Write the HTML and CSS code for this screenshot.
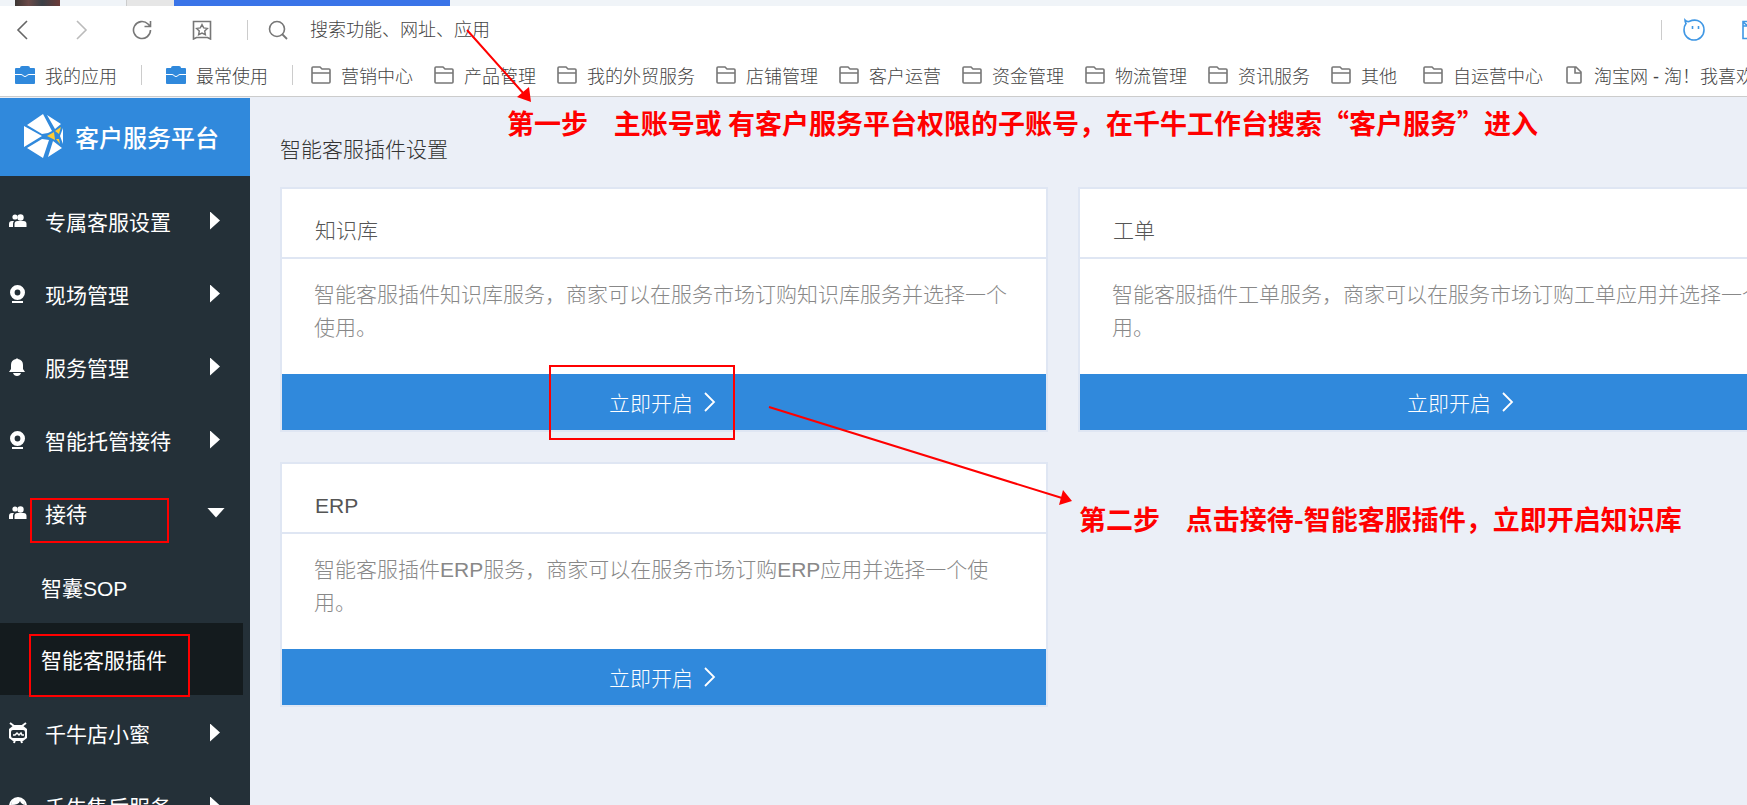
FILE: index.html
```html
<!DOCTYPE html>
<html lang="zh-CN">
<head>
    <meta charset="UTF-8">
    <meta name="viewport" content="width=device-width, initial-scale=1.0">
    <title>客户服务平台</title>
    <link rel="stylesheet" href="styles.css">
</head>
<body>

    <!-- shared icons -->
    <svg class="icon-defs" aria-hidden="true">
        <symbol id="folder" viewBox="0 0 20 20">
            <path d="M1 17V3q0-1 1-1h7l2 2h7q1 0 1 1v12q0 1-1 1H2q-1 0-1-1zM1 8h18" fill="none" stroke="#777" stroke-width="1.6"/>
        </symbol>
        <symbol id="briefcase" viewBox="0 0 20 20">
            <path d="M1 3h4q0-2 2-2h6q2 0 2 2h4q1 0 1 1v5h-6q-1 0-2 1-2 2-4 0-1-1-2-1H0V4q0-1 1-1z" fill="#3089dc"/>
            <path d="M0 10h6q1 0 2 1 2 2 4 0 1-1 2-1h6v8q0 1-1 1H1q-1 0-1-1z" fill="#3089dc"/>
        </symbol>
        <symbol id="page" viewBox="0 0 20 20">
            <path d="M3 17V3q0-1 1-1h8l5 5v10q0 1-1 1H4q-1 0-1-1zM11 2v6h6" fill="none" stroke="#777" stroke-width="1.6"/>
        </symbol>
        <symbol id="people" viewBox="0 0 18 18">
            <circle cx="6" cy="5" r="2.6" fill="#fff"/>
            <path d="M0 15v-3q0-3 3-3h2q-1 1-1 3v3z" fill="#fff"/>
            <circle cx="11.5" cy="5.5" r="3.2" fill="#fff"/>
            <path d="M5.500 15v-3q0-3 3-3h6q3 0 3 3v3z" fill="#fff"/>
        </symbol>
        <symbol id="camera" viewBox="0 0 18 18">
            <circle cx="8.5" cy="7.5" r="5.2" fill="none" stroke="#fff" stroke-width="4.6"/>
            <path d="M3 16h11v2H3z" fill="#fff"/>
        </symbol>
        <symbol id="bell" viewBox="0 0 18 18">
            <path d="M7 1q1-1.500 2 0 5 1 5 6v4l2 3H0l2-3V7q0-5 5-6zM4 15h8q-1 3-4 3t-4-3z" fill="#fff"/>
        </symbol>
        <symbol id="chevron" viewBox="0 0 16 22">
            <path d="M2 2l9 9-9 9" fill="none" stroke="#fff" stroke-width="1.8"/>
        </symbol>
    </svg>

    <div class="tab-strip">
        <div class="tab-thumb"></div>
        <div class="tab"></div>
        <div class="tab tab-active"></div>
    </div>

    <div class="toolbar">
        <button class="tool-button" aria-label="后退">
            <svg width="20" height="20" viewBox="0 0 20 20"><path d="M15 1L6 10l9 9" fill="none" stroke="#666" stroke-width="1.6"/></svg>
        </button>
        <button class="tool-button" aria-label="前进">
            <svg width="20" height="20" viewBox="0 0 20 20"><path d="M5 1l9 9-9 9" fill="none" stroke="#bbb" stroke-width="1.6"/></svg>
        </button>
        <button class="tool-button" aria-label="刷新">
            <svg width="20" height="20" viewBox="0 0 20 20"><path d="M18.500 10a8.500 8.500 0 1 1-2.500-6l2 2M18.500 1v5.500h-6" fill="none" stroke="#777" stroke-width="1.6"/></svg>
        </button>
        <button class="tool-button" aria-label="收藏">
            <svg width="20" height="20" viewBox="0 0 20 20"><path d="M1.500 1.500h17v17.500l-3-1.500h-11l-3 1.500z" fill="none" stroke="#777" stroke-width="1.6"/><path d="M10 4.500l1.700 3.400 3.700.5-2.700 2.600.7 3.700-3.400-1.700-3.400 1.700.7-3.700-2.700-2.600 3.700-.5z" fill="none" stroke="#777" stroke-width="1.400"/></svg>
        </button>
        <span class="divider"></span>
        <label class="search">
            <svg width="20" height="20" viewBox="0 0 20 20" aria-hidden="true"><circle cx="9" cy="9" r="7.500" fill="none" stroke="#777" stroke-width="1.6"/><path d="M14 14l5 5" stroke="#777" stroke-width="1.8"/></svg>
            <input type="text" aria-label="搜索" placeholder="搜索功能、网址、应用">
        </label>
        <span class="divider"></span>
        <button class="tool-button tool-face" aria-label="助手">
            <svg width="24" height="24" viewBox="0 0 24 24"><path d="M3 2q2 2 4 1.500C16-.5 22 5 22 12a10 10 0 0 1-20 0q0-4 2-6.500Q3 4 3 2z" fill="none" stroke="#3f97e4" stroke-width="1.6"/><path d="M10.500 8v3M16.500 8v3" stroke="#3f97e4" stroke-width="1.6"/></svg>
        </button>
        <button class="tool-button tool-mail" aria-label="消息">
            <svg width="20" height="20" viewBox="0 0 20 20"><path d="M1 1.500h18v17H1zM1 6h18M1 2l5 4" fill="none" stroke="#3f97e4" stroke-width="1.6"/></svg>
        </button>
    </div>

    <nav class="bookmarks">
        <a href="#"><svg width="20" height="20"><use href="#briefcase"/></svg>我的应用</a>
        <span class="divider"></span>
        <a href="#"><svg width="20" height="20"><use href="#briefcase"/></svg>最常使用</a>
        <span class="divider divider-last"></span>
        <div class="bookmark-list">
            <a href="#"><svg width="20" height="20"><use href="#folder"/></svg>营销中心</a>
            <a href="#"><svg width="20" height="20"><use href="#folder"/></svg>产品管理</a>
            <a href="#"><svg width="20" height="20"><use href="#folder"/></svg>我的外贸服务</a>
            <a href="#"><svg width="20" height="20"><use href="#folder"/></svg>店铺管理</a>
            <a href="#"><svg width="20" height="20"><use href="#folder"/></svg>客户运营</a>
            <a href="#"><svg width="20" height="20"><use href="#folder"/></svg>资金管理</a>
            <a href="#"><svg width="20" height="20"><use href="#folder"/></svg>物流管理</a>
            <a href="#"><svg width="20" height="20"><use href="#folder"/></svg>资讯服务</a>
            <a href="#"><svg width="20" height="20"><use href="#folder"/></svg>其他&nbsp;</a>
            <a href="#"><svg width="20" height="20"><use href="#folder"/></svg>自运营中心</a>
            <a href="#"><svg width="20" height="20"><use href="#page"/></svg>淘宝网 - 淘！我喜欢</a>
        </div>
    </nav>

    <div class="layout">
        <aside class="sidebar">
            <div class="brand">
                <svg width="40" height="44" viewBox="0 0 40 44" aria-hidden="true">
                    <path d="M3 11L19 0l9 17-4 2-6 1zM0 12l18 10L0 33zM3 34l15-9 7 1-6 18zM23 1l14 9-6 5zM29 27l9 7-14 9z" fill="#fff"/>
                    <path d="M39 14v16l-3-8z" fill="#fff"/>
                    <path d="M23 22l7-4 1 8zM31 17l6-4-2 7zM32 25l3 0 1 5z" fill="#fc3"/>
                </svg>
                <span>客户服务平台</span>
            </div>
            <nav class="menu">
                <a class="menu-item" href="#"><svg width="18" height="18"><use href="#people"/></svg><span>专属客服设置</span><i class="arrow"></i></a>
                <a class="menu-item" href="#"><svg width="18" height="18"><use href="#camera"/></svg><span>现场管理</span><i class="arrow"></i></a>
                <a class="menu-item" href="#"><svg width="18" height="18"><use href="#bell"/></svg><span>服务管理</span><i class="arrow"></i></a>
                <a class="menu-item" href="#"><svg width="18" height="18"><use href="#camera"/></svg><span>智能托管接待</span><i class="arrow"></i></a>
                <a class="menu-item" href="#"><svg width="18" height="18"><use href="#people"/></svg><span>接待</span><i class="arrow arrow-open"></i></a>
                <div class="submenu">
                    <a href="#">智囊SOP</a>
                    <a class="active" href="#">智能客服插件</a>
                </div>
                <a class="menu-item" href="#">
                    <svg width="18" height="22" viewBox="0 0 18 22"><path d="M1 1l4 3M17 1l-4 3M6 18l-1 3M12 18l1 3" stroke="#fff" stroke-width="2"/><path d="M5 3h8l5 4v9l-4 3H4l-4-3V7zM4 8q-2 0-2 2v4q0 2 2 2h10q2 0 2-2v-4q0-2-2-2z" fill="#fff" fill-rule="evenodd"/><path d="M4 13h2l2-2 2 2 2-2 1 2h2" fill="none" stroke="#fff" stroke-width="1.500"/></svg>
                    <span>千牛店小蜜</span><i class="arrow"></i>
                </a>
                <a class="menu-item" href="#">
                    <svg width="18" height="20" viewBox="0 0 18 20"><circle cx="9" cy="10" r="8" fill="none" stroke="#fff" stroke-width="2"/><path d="M2 9q8 0 9-4 1 3 5 4-1-7-7-7T2 9z" fill="#fff"/></svg>
                    <span>千牛售后服务</span><i class="arrow"></i>
                </a>
            </nav>
        </aside>

        <main class="content">
            <h1>智能客服插件设置</h1>
            <div class="cards">
                <section class="card">
                    <h2>知识库</h2>
                    <p>智能客服插件知识库服务，商家可以在服务市场订购知识库服务并选择一个使用。</p>
                    <button>立即开启<svg width="16" height="22"><use href="#chevron"/></svg></button>
                </section>
                <section class="card">
                    <h2>工单</h2>
                    <p>智能客服插件工单服务，商家可以在服务市场订购工单应用并选择一个使用。</p>
                    <button>立即开启<svg width="16" height="22"><use href="#chevron"/></svg></button>
                </section>
                <section class="card">
                    <h2>ERP</h2>
                    <p>智能客服插件ERP服务，商家可以在服务市场订购ERP应用并选择一个使用。</p>
                    <button>立即开启<svg width="16" height="22"><use href="#chevron"/></svg></button>
                </section>
            </div>
        </main>
    </div>

    <!-- step by step notes over the page -->
    <svg class="marks" width="1100" height="720" viewBox="0 0 1100 720" aria-hidden="true">
        <g fill="none" stroke="#f00" stroke-width="2">
            <rect x="31" y="499" width="137" height="43"/>
            <rect x="30" y="635" width="159" height="61"/>
            <rect x="550" y="366" width="184" height="73"/>
            <path d="M467 30L524 94M769 407L1062 498"/>
        </g>
        <path d="M531 102l-14-5 12-10zM1072 501l-13 4 4-15z" fill="#f00"/>
    </svg>
    <div class="note note-first">第一步&ensp;&nbsp;&nbsp;主账号或 有客户服务平台权限的子账号，在千牛工作台搜索“客户服务”进入</div>
    <div class="note note-second">第二步&ensp;&nbsp;&nbsp;点击接待-智能客服插件，立即开启知识库</div>

</body>
</html>
```
FILE: styles.css
```css
* {
    box-sizing: border-box;
}

body {
    margin: 0;
    height: 100vh;
    overflow: hidden;
    position: relative;
    display: flex;
    flex-direction: column;
    font-family: "Liberation Sans", "Noto Sans CJK SC", sans-serif;
    font-weight: 300;
    background-color: #ebeff7;
}

a {
    text-decoration: none;
}

button {
    font: inherit;
    border: none;
    padding: 0;
    cursor: pointer;
}

svg {
    flex-shrink: 0;
}

.icon-defs {
    position: absolute;
    width: 0;
    height: 0;
}

/* browser bars */
.tab-strip {
    display: flex;
    flex-shrink: 0;
    height: 6px;
    padding-left: 15px;
    background-color: #f0f4f8;
}

.tab-thumb {
    width: 45px;
    margin-right: 66px;
    background: linear-gradient(90deg, #3c3634, #6b4a48 30%, #3a4046 60%, #6b3a38);
}

.tab {
    width: 48px;
    background-color: #e6e6e6;
    border-left: 1px solid #ccc;
}

.tab-active {
    width: 276px;
    border: none;
    background-color: #3a74e8;
}

.toolbar {
    display: flex;
    align-items: center;
    flex-shrink: 0;
    height: 48px;
    padding-left: 12px;
    background-color: #fff;
}

.tool-button {
    display: flex;
    width: 20px;
    margin-right: 40px;
    background: none;
}

.divider {
    flex-shrink: 0;
    width: 1px;
    height: 20px;
    background-color: #ccc;
}

.toolbar .divider {
    margin-right: 20px;
}

.toolbar .tool-button + .divider {
    margin-left: -5px;
}

.search {
    display: flex;
    align-items: center;
    flex: 1;
    gap: 22px;
}

.search input {
    flex: 1;
    border: none;
    outline: none;
    padding: 0;
    font: inherit;
    font-size: 18px;
    color: #444;
}

.search input::placeholder {
    color: #444;
}

.tool-face {
    width: 24px;
    margin-right: 36px;
}

.tool-mail {
    width: 5px;
    margin-right: 0;
    overflow: hidden;
}

.bookmarks {
    display: flex;
    align-items: center;
    flex-shrink: 0;
    height: 43px;
    padding-left: 15px;
    border-bottom: 1px solid #ccc;
    background-color: #fff;
    white-space: nowrap;
    overflow: hidden;
}

.bookmarks a {
    display: flex;
    align-items: center;
    gap: 10px;
    font-size: 18px;
    color: #444;
}

.bookmarks .divider {
    margin: 0 24px;
}

.bookmarks .divider-last {
    margin-right: 18px;
}

.bookmark-list {
    display: flex;
    gap: 21px;
}

/* page */
.layout {
    display: flex;
    flex: 1;
    min-width: 1876px;
    min-height: 0;
    margin-top: 1px;
}

.sidebar {
    width: 250px;
    flex-shrink: 0;
    overflow: hidden;
    background-color: #243038;
    color: #fff;
}

.brand {
    display: flex;
    align-items: center;
    gap: 11px;
    height: 78px;
    padding: 0 0 2px 24px;
    background-color: #3089dc;
    font-size: 24px;
    font-weight: 500;
}

.menu {
    padding-top: 8px;
    font-size: 21px;
    font-weight: 400;
}

.menu a {
    display: flex;
    align-items: center;
    color: #fff;
}

.menu-item {
    height: 73px;
    padding: 0 25px 0 9px;
}

.menu-item span {
    flex: 1;
    margin-left: 18px;
}

.arrow {
    width: 10px;
    height: 18px;
    margin-right: 5px;
    background-color: #fff;
    clip-path: polygon(0 0, 100% 50%, 0 100%);
}

.arrow-open {
    width: 18px;
    height: 10px;
    margin-right: 0;
    clip-path: polygon(0 0, 100% 0, 50% 100%);
}

.submenu {
    padding: 2px 7px 1px 0;
}

.submenu a {
    height: 72px;
    padding-left: 41px;
}

.submenu .active {
    background-color: #141b1e;
}

.content {
    flex: 1;
    padding: 37px 30px;
}

.content h1 {
    margin: 0 0 22px;
    font-size: 21px;
    font-weight: 300;
    line-height: 30px;
    color: #333;
}

.cards {
    display: grid;
    grid-template-columns: 1fr 1fr;
    gap: 30px;
}

.card {
    border: 2px solid #dfe6f3;
    background-color: #fff;
    font-size: 21px;
}

.card h2 {
    margin: 0;
    padding: 27px 33px 11px;
    border-bottom: 2px solid #dfe6f3;
    font-size: 21px;
    font-weight: 300;
    line-height: 30px;
    color: #555;
}

.card p {
    margin: 0;
    padding: 19px 32px 30px;
    line-height: 33px;
    color: #888;
}

.card button {
    display: flex;
    align-items: center;
    justify-content: center;
    gap: 10px;
    width: 100%;
    height: 56px;
    background-color: #3089dc;
    color: #fff;
}

/* notes */
.marks {
    position: absolute;
    left: 0;
    top: 0;
    pointer-events: none;
}

.note {
    position: absolute;
    font-family: "Noto Sans CJK SC", sans-serif;
    font-size: 27px;
    font-weight: bold;
    line-height: 36px;
    color: #f00;
    white-space: nowrap;
}

.note-first {
    left: 507px;
    top: 105px;
}

.note-second {
    left: 1079px;
    top: 501px;
}
```
